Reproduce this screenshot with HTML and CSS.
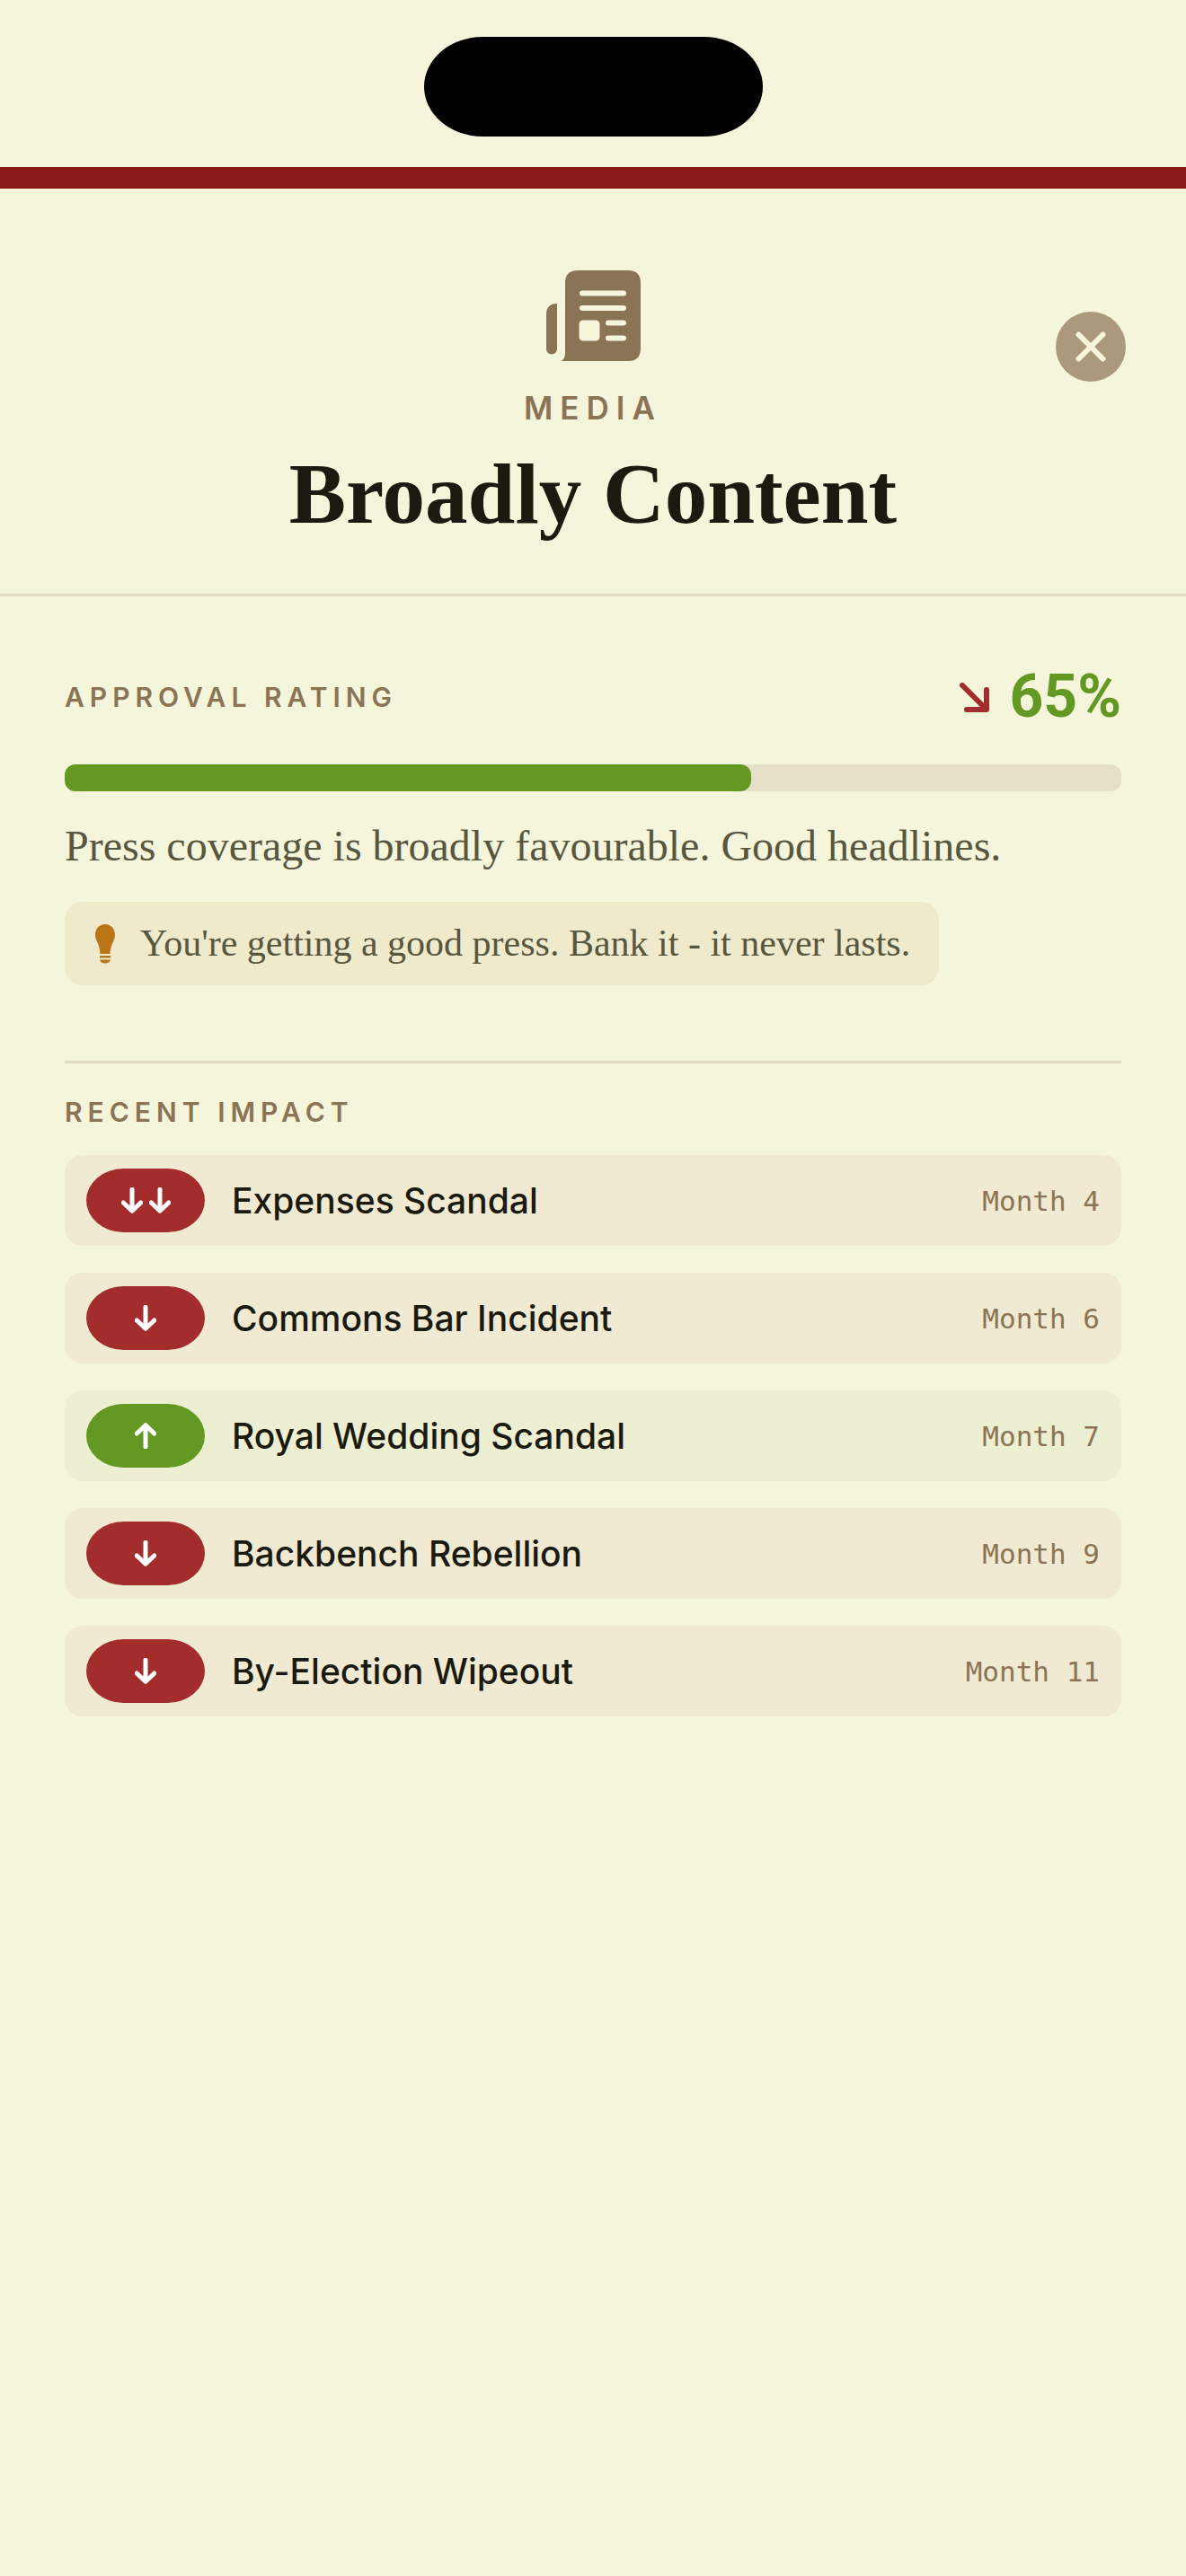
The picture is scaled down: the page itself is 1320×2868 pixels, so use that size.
FILE: index.html
```html
<!DOCTYPE html>
<html lang="en-GB">
<head>
    <meta charset="UTF-8">
    <meta name="viewport" content="width=device-width, initial-scale=1.0">
    <title>Media - Broadly Content</title>
    <link rel="stylesheet" href="styles.css">
</head>
<body>
    <!-- arrow shapes used by the impact pills -->
    <svg class="symbols" aria-hidden="true">
        <symbol id="arrow-down" viewBox="0 0 24 29">
            <path d="M12 2.3V26M2.3 17L12 26.3L21.7 17"/>
        </symbol>
        <symbol id="arrow-up" viewBox="0 0 24 29">
            <path d="M12 26.7V3M2.3 12L12 2.7L21.7 12"/>
        </symbol>
    </svg>

    <div class="status-bar">
        <div class="island"></div>
    </div>

    <header class="header">
        <div class="header-text">
            <svg class="media-icon" viewBox="0 0 105 101" aria-hidden="true">
                <path d="M12 37V87.500A6 6 0 0 1 0 87.500V49Q0 37 12 37Z"/>
                <path fill-rule="evenodd" d="M35 0H91Q105 0 105 14V87Q105 101 91 101H16.500Q21 98.500 21 92V14Q21 0 35 0ZM40 22.500A3 3 0 0 0 40 28.500H86A3 3 0 0 0 86 22.500ZM40 39A3 3 0 0 0 40 45H86A3 3 0 0 0 86 39ZM41.500 55.500Q36.500 55.500 36.500 60.500V73.500Q36.500 78.500 41.500 78.500H54.500Q59.500 78.500 59.500 73.500V60.500Q59.500 55.500 54.500 55.500ZM69 55.500A3 3 0 0 0 69 61.500H86A3 3 0 0 0 86 55.500ZM69 72.500A3 3 0 0 0 69 78.500H86A3 3 0 0 0 86 72.500Z"/>
            </svg>
            <div class="category">MEDIA</div>
            <h1>Broadly Content</h1>
        </div>
        <button class="close" type="button" aria-label="Close">
            <svg viewBox="0 0 78 78" aria-hidden="true">
                <path d="M25.500 25.500L52.500 52.500M52.500 25.500L25.500 52.500"/>
            </svg>
        </button>
    </header>

    <main class="content">
        <section class="approval">
            <div class="approval-row">
                <h2>APPROVAL RATING</h2>
                <div class="score">
                    <svg class="trend" viewBox="0 0 33 33" aria-hidden="true">
                        <path d="M3 3L29 29M30 8V30H8"/>
                    </svg>
                    <span>65%</span>
                </div>
            </div>
            <div class="bar">
                <div class="bar-fill" style="width: 65%"></div>
            </div>
            <p class="summary">Press coverage is broadly favourable. Good headlines.</p>
            <div class="tip">
                <svg class="bulb" viewBox="0 0 22 44" aria-hidden="true">
                    <path d="M11 0C17.500 0 22 5 22 11.500C22 19 17 21 16.500 33H5.500C5 21 0 19 0 11.500C0 5 4.500 0 11 0Z"/>
                    <path d="M5 35H17V37.500H5ZM5 39.500H17Q16 43.500 11 43.500Q6 43.500 5 39.500Z"/>
                </svg>
                <p>You're getting a good press. Bank it - it never lasts.</p>
            </div>
        </section>

        <section class="impact">
            <h2>RECENT IMPACT</h2>
            <ul class="impact-list">
                <li class="impact-item down">
                    <span class="pill"><svg><use href="#arrow-down"/></svg><svg><use href="#arrow-down"/></svg></span>
                    <span class="name">Expenses Scandal</span>
                    <span class="month">Month 4</span>
                </li>
                <li class="impact-item down">
                    <span class="pill"><svg><use href="#arrow-down"/></svg></span>
                    <span class="name">Commons Bar Incident</span>
                    <span class="month">Month 6</span>
                </li>
                <li class="impact-item up">
                    <span class="pill"><svg><use href="#arrow-up"/></svg></span>
                    <span class="name">Royal Wedding Scandal</span>
                    <span class="month">Month 7</span>
                </li>
                <li class="impact-item down">
                    <span class="pill"><svg><use href="#arrow-down"/></svg></span>
                    <span class="name">Backbench Rebellion</span>
                    <span class="month">Month 9</span>
                </li>
                <li class="impact-item down">
                    <span class="pill"><svg><use href="#arrow-down"/></svg></span>
                    <span class="name">By-Election Wipeout</span>
                    <span class="month">Month 11</span>
                </li>
            </ul>
        </section>
    </main>
</body>
</html>
```
FILE: styles.css
```css
* {
    box-sizing: border-box;
}

body {
    margin: 0;
    min-height: 100vh;
    background: #f5f5dc;
    color: #1a1a10;
    font-family: Inter, "Liberation Sans", sans-serif;
}

h1, h2, p, ul {
    margin: 0;
    padding: 0;
}

svg {
    display: block;
    flex-shrink: 0;
}

.symbols {
    display: none;
}

.status-bar {
    display: flex;
    justify-content: center;
    padding: 41px 0 34px;
    border-bottom: 24px solid #8b1a1a;
}

.island {
    width: 377px;
    height: 111px;
    border-radius: 66px / 56px;
    background: #000;
}

.header {
    position: relative;
    padding: 91px 67px 57px;
    border-bottom: 3px solid #e0dbc1;
}

.header-text {
    display: flex;
    flex-direction: column;
    align-items: center;
}

.media-icon {
    width: 105px;
    height: 101px;
    fill: #8b7355;
}

.category {
    margin-top: 30px;
    font-size: 35px;
    font-weight: 600;
    line-height: 44px;
    letter-spacing: 8px;
    color: #8b7355;
}

h1 {
    margin-top: 20px;
    font-family: "Liberation Serif", serif;
    font-size: 95px;
    font-weight: bold;
    line-height: 108px;
}

/* sits over the right side of the centred header */
.close {
    position: absolute;
    top: 137px;
    right: 67px;
    width: 78px;
    height: 78px;
    padding: 0;
    border: none;
    border-radius: 50%;
    background: #ac997d;
    cursor: pointer;
}

.close path {
    fill: none;
    stroke: #f5f5dc;
    stroke-width: 6;
    stroke-linecap: round;
}

.content {
    padding: 72px;
}

h2 {
    font-size: 30px;
    font-weight: 600;
    line-height: 40px;
    letter-spacing: 6px;
    color: #8b7355;
}

.approval-row {
    display: flex;
    justify-content: space-between;
    align-items: center;
    height: 80px;
}

.score {
    display: flex;
    align-items: center;
    gap: 22px;
    font-family: Roboto, sans-serif;
    font-size: 66px;
    font-weight: bold;
    line-height: 80px;
    color: #639922;
}

.trend {
    width: 33px;
    height: 33px;
}

.trend path {
    fill: none;
    stroke: #a32d2d;
    stroke-width: 6;
    stroke-linecap: round;
    stroke-linejoin: round;
}

.bar {
    height: 30px;
    margin-top: 35px;
    border-radius: 12px;
    background: #e5dfc7;
}

.bar-fill {
    height: 100%;
    border-radius: 12px;
    background: #639922;
}

.summary {
    margin-top: 31px;
    font-family: "Liberation Serif", serif;
    font-size: 48px;
    line-height: 60px;
    color: #575740;
}

.tip {
    display: flex;
    align-items: center;
    gap: 28px;
    width: fit-content;
    margin-top: 32px;
    padding: 18px 32px 18px 34px;
    border-radius: 20px;
    background: #f0eacd;
    font-family: "Liberation Serif", serif;
    font-size: 42px;
    line-height: 57px;
    color: #575740;
}

.bulb {
    width: 22px;
    height: 44px;
    fill: #ba7517;
}

.impact {
    margin-top: 84px;
    padding-top: 34px;
    border-top: 3px solid #e0dbc1;
}

.impact-list {
    display: flex;
    flex-direction: column;
    gap: 30px;
    margin-top: 28px;
    list-style: none;
}

.impact-item {
    display: flex;
    align-items: center;
    gap: 30px;
    padding: 15px 24px;
    border-radius: 20px;
}

.impact-item.down {
    background: #f1ead3;
}

.impact-item.up {
    background: #edefd3;
}

.pill {
    display: flex;
    justify-content: center;
    align-items: center;
    gap: 7px;
    width: 132px;
    height: 71px;
    border-radius: 42px / 36px;
}

.down .pill {
    background: #a32d2d;
}

.up .pill {
    background: #639922;
}

.pill svg {
    width: 24px;
    height: 29px;
    fill: none;
    stroke: #fff;
    stroke-width: 5;
    stroke-linecap: round;
    stroke-linejoin: round;
}

.name {
    flex-grow: 1;
    font-size: 39px;
    font-weight: 500;
    line-height: 48px;
}

.month {
    font-family: "DejaVu Sans Mono", monospace;
    font-size: 31px;
    line-height: 40px;
    color: #8b7355;
}
```
